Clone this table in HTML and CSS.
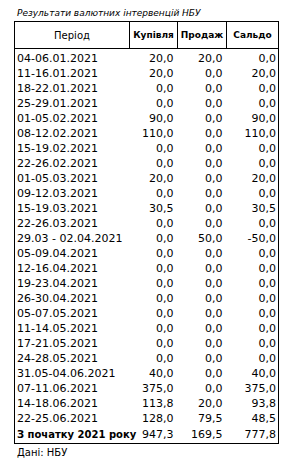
FILE: index.html
```html
<!DOCTYPE html>
<html lang="uk">
<head>
<meta charset="utf-8">
<link rel="stylesheet" href="styles.css">
</head>
<body>
<div class="page">
  <div class="title">Результати валютних інтервенцій НБУ</div>
  <table class="tbl">
    <colgroup><col class="c1"><col class="c2"><col class="c3"><col class="c4"></colgroup>
    <thead>
      <tr><th class="period">Період</th><th>Купівля</th><th>Продаж</th><th>Сальдо</th></tr>
    </thead>
    <tbody>
      <tr class="first"><td>04-06.01.2021</td><td>20,0</td><td>20,0</td><td>0,0</td></tr>
      <tr><td>11-16.01.2021</td><td>20,0</td><td>0,0</td><td>20,0</td></tr>
      <tr><td>18-22.01.2021</td><td>0,0</td><td>0,0</td><td>0,0</td></tr>
      <tr><td>25-29.01.2021</td><td>0,0</td><td>0,0</td><td>0,0</td></tr>
      <tr><td>01-05.02.2021</td><td>90,0</td><td>0,0</td><td>90,0</td></tr>
      <tr><td>08-12.02.2021</td><td>110,0</td><td>0,0</td><td>110,0</td></tr>
      <tr><td>15-19.02.2021</td><td>0,0</td><td>0,0</td><td>0,0</td></tr>
      <tr><td>22-26.02.2021</td><td>0,0</td><td>0,0</td><td>0,0</td></tr>
      <tr><td>01-05.03.2021</td><td>20,0</td><td>0,0</td><td>20,0</td></tr>
      <tr><td>09-12.03.2021</td><td>0,0</td><td>0,0</td><td>0,0</td></tr>
      <tr><td>15-19.03.2021</td><td>30,5</td><td>0,0</td><td>30,5</td></tr>
      <tr><td>22-26.03.2021</td><td>0,0</td><td>0,0</td><td>0,0</td></tr>
      <tr><td>29.03 - 02.04.2021</td><td>0,0</td><td>50,0</td><td>-50,0</td></tr>
      <tr><td>05-09.04.2021</td><td>0,0</td><td>0,0</td><td>0,0</td></tr>
      <tr><td>12-16.04.2021</td><td>0,0</td><td>0,0</td><td>0,0</td></tr>
      <tr><td>19-23.04.2021</td><td>0,0</td><td>0,0</td><td>0,0</td></tr>
      <tr><td>26-30.04.2021</td><td>0,0</td><td>0,0</td><td>0,0</td></tr>
      <tr><td>05-07.05.2021</td><td>0,0</td><td>0,0</td><td>0,0</td></tr>
      <tr><td>11-14.05.2021</td><td>0,0</td><td>0,0</td><td>0,0</td></tr>
      <tr><td>17-21.05.2021</td><td>0,0</td><td>0,0</td><td>0,0</td></tr>
      <tr><td>24-28.05.2021</td><td>0,0</td><td>0,0</td><td>0,0</td></tr>
      <tr><td>31.05-04.06.2021</td><td>40,0</td><td>0,0</td><td>40,0</td></tr>
      <tr><td>07-11.06.2021</td><td>375,0</td><td>0,0</td><td>375,0</td></tr>
      <tr><td>14-18.06.2021</td><td>113,8</td><td>20,0</td><td>93,8</td></tr>
      <tr><td>22-25.06.2021</td><td>128,0</td><td>79,5</td><td>48,5</td></tr>
      <tr class="total"><td>З початку 2021 року</td><td>947,3</td><td>169,5</td><td>777,8</td></tr>
    </tbody>
  </table>
  <div class="note">Дані: НБУ</div>
</div>
</body>
</html>
```
FILE: styles.css
```css
html, body {
  margin: 0;
  padding: 0;
  background: #fff;
}
.page {
  padding: 8px 0 0 14px;
  font-family: "DejaVu Sans", Verdana, sans-serif;
  color: #000;
}
.title {
  font-style: italic;
  font-size: 9px;
  line-height: 11px;
  padding-left: 3px;
  margin-bottom: 2px;
}
.tbl {
  border-collapse: collapse;
  table-layout: fixed;
  width: 265px;
  border: 1px solid #000;
  font-size: 11px;
}
.c1 { width: 115px; }
.c2 { width: 48px; }
.c3 { width: 49px; }
.c4 { width: 52px; }
.tbl th {
  border: 1px solid #000;
  height: 26px;
  padding: 0;
  font-size: 9px;
  font-weight: bold;
  text-align: center;
  vertical-align: middle;
}
.tbl th.period {
  font-weight: normal;
  font-size: 10px;
}
.tbl td {
  height: 15px;
  padding: 0 4px 0 0;
  line-height: 15px;
  text-align: right;
  white-space: nowrap;
}
.tbl td:first-child {
  text-align: left;
  padding: 0 0 0 2px;
}
.tbl td:last-child {
  padding-right: 2px;
}
.tbl tr.first td {
  padding-top: 2px;
}
.tbl tr.total td {
  height: 17px;
}
.tbl tr.total td:first-child {
  font-weight: bold;
  font-size: 10px;
}
.note {
  font-size: 10px;
  padding: 3px 0 0 3px;
}
```
